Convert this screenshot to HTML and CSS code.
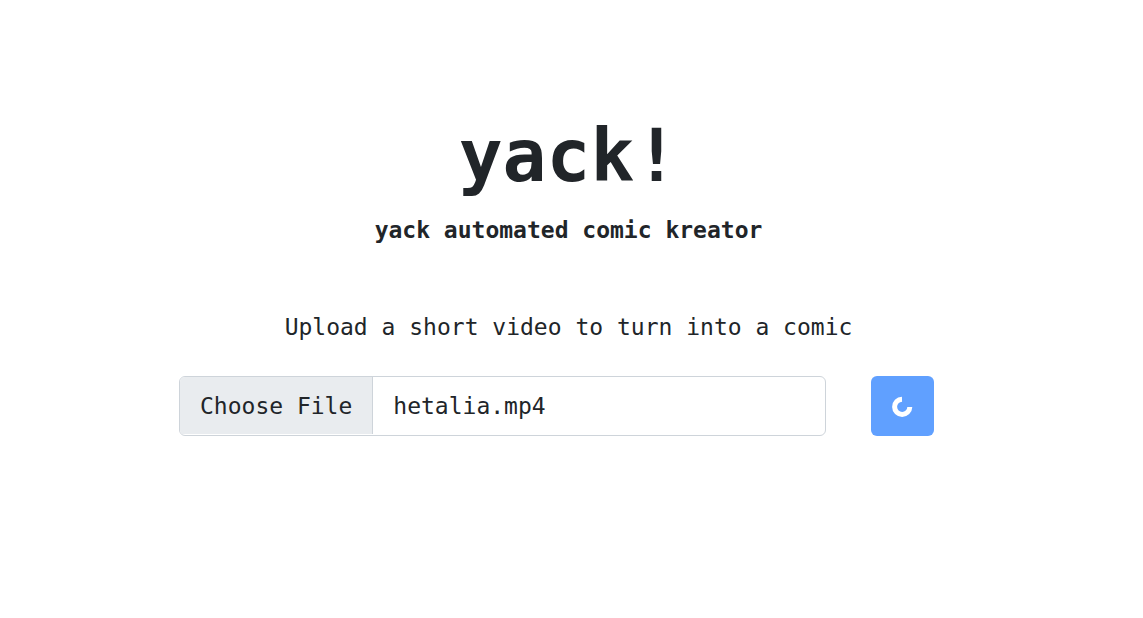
FILE: index.html
```html
<!DOCTYPE html>
<html lang="en">
<head>
  <meta charset="utf-8">
  <meta name="viewport" content="width=device-width, initial-scale=1">
  <title>yack!</title>
  <link rel="stylesheet" href="styles.css">
</head>
<body>
  <main class="page">
    <h1 class="title">yack!</h1>
    <p class="tagline">yack automated comic kreator</p>
    <p class="prompt" id="prompt">Upload a short video to turn into a comic</p>
    <form class="upload">
      <label class="file">
        <span class="file-button">Choose File</span>
        <span class="file-name">hetalia.mp4</span>
        <input class="file-input" type="file" accept="video/*" aria-describedby="prompt">
      </label>
      <button class="submit" type="submit" aria-label="Uploading" disabled>
        <svg class="spinner" viewBox="0 0 21 21" aria-hidden="true">
          <path d="M10 3.2A7.6 7.6 0 1 0 17.8 11" fill="none" stroke="currentColor" stroke-width="5"/>
        </svg>
      </button>
    </form>
  </main>
</body>
</html>
```

FILE: styles.css
```css
* {
  box-sizing: border-box;
}

body {
  margin: 0;
  background: #fff;
  color: #212529;
  font-family: "DejaVu Sans Mono", monospace;
  font-size: 23px;
  line-height: 36px;
}

.page {
  display: flex;
  flex-direction: column;
  align-items: center;
  padding: 110px 6px 48px 0;
  text-align: center;
}

.title {
  margin: 0 0 10px;
  font-size: 73px;
  line-height: 92px;
}

.tagline {
  margin: 0 0 61px;
  font-weight: 700;
}

.prompt {
  margin: 0 0 31px;
}

.upload {
  display: flex;
  gap: 45px;
  width: 100%;
  max-width: 779px;
  padding-right: 24px;
}

.file {
  position: relative;
  display: flex;
  flex: 1;
  min-width: 0;
  padding-bottom: 1px;
  border: 1px solid #ced4da;
  border-radius: 6px;
  overflow: hidden;
  text-align: left;
}

.file-button {
  padding: 11px 20px 10px;
  border-right: 1px solid #ced4da;
  background: #e9ecef;
  white-space: nowrap;
}

.file-name {
  flex: 1;
  padding: 11px 20px 10px;
  overflow: hidden;
  text-overflow: ellipsis;
  white-space: nowrap;
}

.file-input {
  position: absolute;
  inset: 0;
  width: 100%;
  opacity: 0;
  cursor: pointer;
}

.submit {
  display: flex;
  align-items: center;
  justify-content: center;
  width: 63px;
  height: 60px;
  padding: 0;
  border: 0;
  border-radius: 6px;
  background: #60a0ff;
  color: #fff;
}

.spinner {
  width: 21px;
  height: 21px;
}
```
